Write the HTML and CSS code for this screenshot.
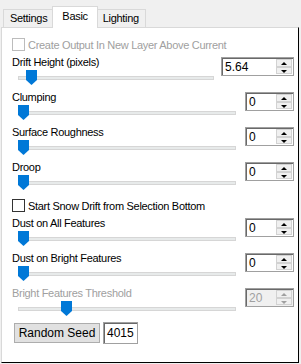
FILE: index.html
```html
<!DOCTYPE html>
<html lang="en">
<head>
    <meta charset="UTF-8">
    <title>Snow Drift</title>
    <link rel="stylesheet" href="styles.css">
</head>
<body>
    <div class="window">
        <div class="tabs">
            <div class="tab">Settings</div>
            <div class="tab active">Basic</div>
            <div class="tab">Lighting</div>
        </div>
        <div class="panel">
            <label class="check disabled"><span class="box"></span>Create Output In New Layer Above Current</label>

            <div class="slider-row wide">
                <div class="label">Drift Height (pixels)</div>
                <div class="spin"><span class="value">5.64</span><span class="arrows"><span class="up"></span><span class="down"></span></span></div>
                <div class="slider"><div class="track"></div><svg class="thumb" style="left: 8px" width="11" height="15" viewBox="0 0 11 15"><polygon points="0,0 11,0 11,10 5.5,15 0,10"/></svg></div>
            </div>

            <div class="slider-row">
                <div class="label">Clumping</div>
                <div class="spin"><span class="value">0</span><span class="arrows"><span class="up"></span><span class="down"></span></span></div>
                <div class="slider"><div class="track"></div><svg class="thumb" style="left: 0" width="11" height="15" viewBox="0 0 11 15"><polygon points="0,0 11,0 11,10 5.5,15 0,10"/></svg></div>
            </div>

            <div class="slider-row">
                <div class="label">Surface Roughness</div>
                <div class="spin"><span class="value">0</span><span class="arrows"><span class="up"></span><span class="down"></span></span></div>
                <div class="slider"><div class="track"></div><svg class="thumb" style="left: 0" width="11" height="15" viewBox="0 0 11 15"><polygon points="0,0 11,0 11,10 5.5,15 0,10"/></svg></div>
            </div>

            <div class="slider-row">
                <div class="label">Droop</div>
                <div class="spin"><span class="value">0</span><span class="arrows"><span class="up"></span><span class="down"></span></span></div>
                <div class="slider"><div class="track"></div><svg class="thumb" style="left: 0" width="11" height="15" viewBox="0 0 11 15"><polygon points="0,0 11,0 11,10 5.5,15 0,10"/></svg></div>
            </div>

            <label class="check"><span class="box"></span>Start Snow Drift from Selection Bottom</label>

            <div class="slider-row">
                <div class="label">Dust on All Features</div>
                <div class="spin"><span class="value">0</span><span class="arrows"><span class="up"></span><span class="down"></span></span></div>
                <div class="slider"><div class="track"></div><svg class="thumb" style="left: 0" width="11" height="15" viewBox="0 0 11 15"><polygon points="0,0 11,0 11,10 5.5,15 0,10"/></svg></div>
            </div>

            <div class="slider-row">
                <div class="label">Dust on Bright Features</div>
                <div class="spin"><span class="value">0</span><span class="arrows"><span class="up"></span><span class="down"></span></span></div>
                <div class="slider"><div class="track"></div><svg class="thumb" style="left: 0" width="11" height="15" viewBox="0 0 11 15"><polygon points="0,0 11,0 11,10 5.5,15 0,10"/></svg></div>
            </div>

            <div class="slider-row disabled">
                <div class="label">Bright Features Threshold</div>
                <div class="spin"><span class="value">20</span><span class="arrows"><span class="up"></span><span class="down"></span></span></div>
                <div class="slider"><div class="track"></div><svg class="thumb" style="left: 43px" width="11" height="15" viewBox="0 0 11 15"><polygon points="0,0 11,0 11,10 5.5,15 0,10"/></svg></div>
            </div>

            <div class="seed-row">
                <button class="seed-button">Random Seed</button>
                <div class="seed-box">4015</div>
            </div>
        </div>
    </div>
</body>
</html>
```

FILE: styles.css
```css
body {
    margin: 0;
    font-family: "Liberation Sans", Arial, sans-serif;
    font-size: 11px;
    letter-spacing: -0.3px;
    color: #000;
    background-color: #f0f0f0;
}

.window {
    width: 301px;
    height: 364px;
    padding-left: 1px;
    box-sizing: border-box;
    background-color: #f0f0f0;
}

/* tab strip */

.tabs {
    display: flex;
    align-items: flex-end;
    height: 27px;
    padding-left: 2px;
}

.tab {
    height: 17px;
    line-height: 17px;
    padding: 0 6px;
    border: 1px solid #d9d9d9;
    border-bottom: none;
    background-color: #f0f0f0;
}

.tab.active {
    height: 21px;
    line-height: 19px;
    padding: 0 9px;
    margin: 0 -2px -1px;
    background-color: #fff;
    position: relative;
    z-index: 1;
}

/* panel */

.panel {
    width: 298px;
    height: 336px;
    box-sizing: border-box;
    padding: 6px 4px 0 10px;
    background-color: #fff;
    border-top: 1px solid #d9d9d9;
    border-left: 1px solid #d9d9d9;
    border-right: 1px solid #000;
    border-bottom: 1px solid #000;
}

.check {
    display: flex;
    align-items: center;
    gap: 3px;
    height: 21px;
}

.check .box {
    width: 11px;
    height: 11px;
    border: 1px solid #333;
    background-color: #fff;
}

.check.disabled {
    color: #a0a0a0;
}

.check.disabled .box {
    border-color: #bcbcbc;
}

.slider-row {
    display: grid;
    grid-template-columns: 1fr 49px;
    grid-template-rows: 14px 18px;
    column-gap: 9px;
    height: 35px;
}

.slider-row.wide {
    grid-template-columns: 1fr 73px;
    column-gap: 7px;
}

.label {
    line-height: 14px;
    white-space: nowrap;
}

.slider-row.disabled .label {
    color: #a0a0a0;
}

.slider {
    position: relative;
    grid-column: 1;
    grid-row: 2;
    margin-left: 6px;
}

.track {
    margin-top: 7px;
    height: 2px;
    background-color: #e7eaea;
    border: 1px solid #d6d6d6;
}

.thumb {
    position: absolute;
    top: 1px;
    fill: #0078d7;
}

/* numeric up/down */

.spin {
    grid-column: 2;
    grid-row: 1 / 3;
    align-self: start;
    display: flex;
    height: 19px;
    margin-top: 2px;
    box-sizing: border-box;
    border: 1px solid #a0a0a0;
    box-shadow: inset 1px 1px 0 #696969;
    background-color: #fff;
}

.spin .value {
    flex: 1;
    padding: 1px 0 0 3px;
    line-height: 16px;
    font-size: 12px;
    letter-spacing: 0;
}

.spin .arrows {
    display: flex;
    flex-direction: column;
    width: 16px;
    padding: 1px 1px 1px 0;
}

.spin .up,
.spin .down {
    flex: 1;
    position: relative;
    background-color: #f0f0f0;
    border: 1px solid #d2d2d2;
}

.spin .up::after,
.spin .down::after {
    content: "";
    position: absolute;
    left: 4px;
    border-left: 3px solid transparent;
    border-right: 3px solid transparent;
}

.spin .up::after {
    top: 2px;
    border-bottom: 3px solid #000;
}

.spin .down::after {
    top: 2px;
    border-top: 3px solid #000;
}

.slider-row.disabled .spin {
    background-color: #f0f0f0;
}

.slider-row.disabled .value {
    color: #a0a0a0;
}

.slider-row.disabled .up::after {
    border-bottom-color: #a0a0a0;
}

.slider-row.disabled .down::after {
    border-top-color: #a0a0a0;
}

/* seed */

.seed-row {
    display: flex;
    align-items: center;
    gap: 3px;
    height: 24px;
    padding-left: 2px;
}

.seed-button {
    width: 86px;
    height: 20px;
    padding: 0;
    font-family: inherit;
    font-size: 12px;
    letter-spacing: 0;
    background-color: #e1e1e1;
    border: 1px solid #adadad;
}

.seed-box {
    width: 35px;
    height: 22px;
    box-sizing: border-box;
    padding-left: 3px;
    line-height: 20px;
    font-size: 12px;
    letter-spacing: 0;
    border: 1px solid #a0a0a0;
    box-shadow: inset 1px 1px 0 #696969;
}
```
